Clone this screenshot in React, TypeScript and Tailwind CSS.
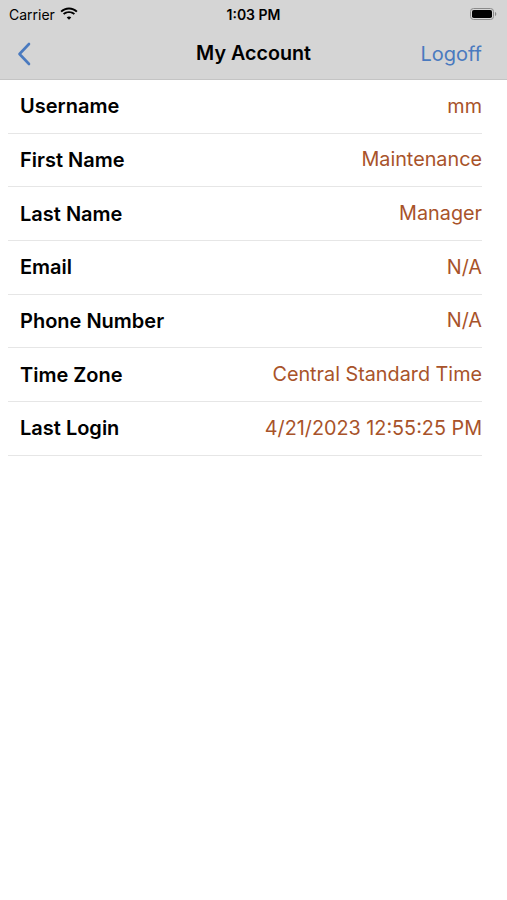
import React from 'react';

const rows: [string, string][] = [
  ['Username', 'mm'],
  ['First Name', 'Maintenance'],
  ['Last Name', 'Manager'],
  ['Email', 'N/A'],
  ['Phone Number', 'N/A'],
  ['Time Zone', 'Central Standard Time'],
  ['Last Login', '4/21/2023 12:55:25 PM'],
];

const App = () => {
  return (
    <div className="min-h-[900px] w-[507px] bg-white" style={{ fontFamily: '"Inter", "Liberation Sans", sans-serif' }}>
      {/* Status + nav bar */}
      <header className="bg-[#d5d5d5] border-b border-[#c4c4c4]">
        <div className="h-[28px] px-[9px] grid grid-cols-3 items-center text-[14px] text-black">
          <div className="flex items-center gap-[5px]">
            <span>Carrier</span>
            <svg width="18" height="14" viewBox="0 0 17 13">
              <path d="M8.5 2.2c2.6 0 5 1 6.8 2.7l1.3-1.3C14.5 1.6 11.6.4 8.5.4S2.5 1.6.4 3.6l1.3 1.3C3.5 3.2 5.9 2.2 8.5 2.2z" fill="#000" />
              <path d="M8.5 5.6c1.7 0 3.2.6 4.4 1.7l1.3-1.3C12.7 4.6 10.7 3.8 8.5 3.8S4.3 4.6 2.8 6l1.3 1.3c1.2-1.1 2.7-1.7 4.4-1.7z" fill="#000" />
              <path d="M8.5 8.9c.8 0 1.5.3 2.1.8L8.5 12 6.4 9.7c.6-.5 1.3-.8 2.1-.8z" fill="#000" />
            </svg>
          </div>
          <div className="text-center font-semibold">1:03 PM</div>
          <div className="flex justify-end pr-[1px]">
            <svg width="27" height="12" viewBox="0 0 27 12">
              <rect x="0.5" y="0.5" width="23" height="11" rx="3" fill="none" stroke="#8a8a8a" strokeWidth="1" />
              <rect x="2" y="2" width="20" height="8" rx="1.8" fill="#000" />
              <path d="M25 4v4c.8-.3 1.3-1.1 1.3-2s-.5-1.7-1.3-2z" fill="#8a8a8a" />
            </svg>
          </div>
        </div>
        <div className="h-[51px] px-[17px] grid grid-cols-[1fr_auto_1fr] items-center">
          <div>
            <svg width="14" height="24" viewBox="0 0 14 24">
              <path d="M12 2L2.5 12 12 22" fill="none" stroke="#4a7abf" strokeWidth="2.6" strokeLinecap="round" strokeLinejoin="round" />
            </svg>
          </div>
          <div className="text-[19.7px] font-semibold text-black">My Account</div>
          <div className="pr-[8px] text-right text-[20px] text-[#4a7abf]">Logoff</div>
        </div>
      </header>

      {/* Account details */}
      <div className="pl-[8px] pr-[25px]">
        {rows.map(([label, value]) => (
          <div key={label} className="h-[53.7px] pl-[12px] flex items-center justify-between border-b border-[#e6e6e6]">
            <span className="text-[20px] font-semibold text-black">{label}</span>
            <span className="text-[19.8px] text-[#a8532a]">{value}</span>
          </div>
        ))}
      </div>
    </div>
  );
};

export default App;
